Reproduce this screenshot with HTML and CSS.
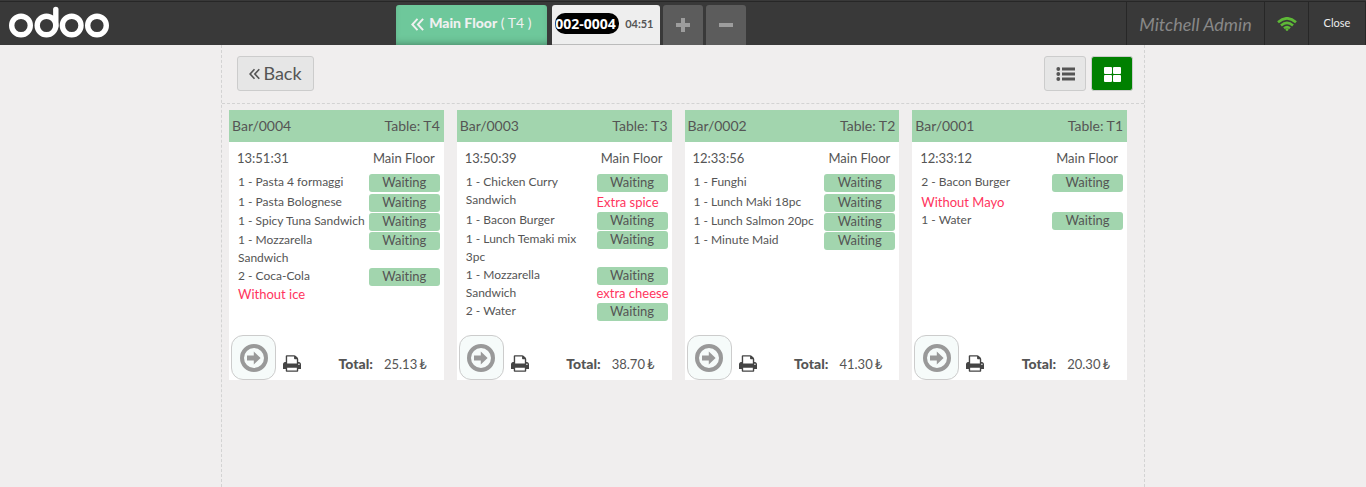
FILE: index.html
```html
<!DOCTYPE html>
<html lang="en">
<head>
<meta charset="utf-8">
<title>Odoo POS - Kitchen orders</title>
<link rel="stylesheet" href="styles.css">
</head>
<body>
<svg class="sprite" aria-hidden="true">
  <symbol id="go" viewBox="0 0 28 28"><circle cx="14" cy="14" r="12" fill="none" stroke="currentColor" stroke-width="4"/><path fill="currentColor" d="M7 11.6h6.8V7.6l6.8 6.4-6.8 6.4v-4H7z"/></symbol>
  <symbol id="print" viewBox="64 128 1664 1536"><path fill="currentColor" d="M448 1536h896v-256h-896v256zm0-640h896v-384h-160q-40 0-68-28t-28-68v-160h-640v640zm1152 64q0-26-19-45t-45-19-45 19-19 45 19 45 45 19 45-19 19-45zm128 0v416q0 13-9.5 22.5t-22.5 9.5h-224v160q0 40-28 68t-68 28h-960q-40 0-68-28t-28-68v-160h-224q-13 0-22.5-9.5t-9.5-22.5v-416q0-79 56.5-135.5t135.5-56.5h64v-544q0-40 28-68t68-28h672q40 0 88 20t76 48l152 152q28 28 48 76t20 88v256h64q79 0 135.5 56.5t56.5 135.5z"/></symbol>
  <symbol id="chevrons" viewBox="0 0 12 12"><path fill="none" stroke="currentColor" stroke-width="1.8" d="M6 .8L1.2 6 6 11.2M11.2.8L6.4 6l4.8 5.2"/></symbol>
</svg>
<header class="topbar">
  <a class="brand" href="#" aria-label="odoo">
    <svg class="logo" viewBox="0 0 100 32" fill="none" stroke="#fff" stroke-width="5.400"><circle cx="12" cy="19.500" r="9.300"/><circle cx="37.500" cy="19.500" r="9.300"/><circle cx="62.700" cy="19.500" r="9.300"/><circle cx="88" cy="19.500" r="9.300"/><path d="M46.800 20V3.500" stroke-linecap="round"/></svg>
  </a>
  <nav class="tabs">
    <button class="floor-tab"><svg class="floor-icon"><use href="#chevrons"/></svg><span><b>Main Floor</b> ( T4 )</span></button>
    <button class="order-tab"><span class="order-no">002-0004</span><span class="order-time">04:51</span></button>
    <button class="square-tab" aria-label="New order"><svg class="sign" viewBox="0 0 14 14"><path d="M7 0v14M0 7h14" stroke="#9d9d9d" stroke-width="4"/></svg></button>
    <button class="square-tab" aria-label="Remove order"><svg class="sign" viewBox="0 0 14 14"><path d="M0 7h14" stroke="#9d9d9d" stroke-width="4"/></svg></button>
  </nav>
  <div class="status">
    <span class="user">Mitchell Admin</span>
    <span class="wifi"><svg class="wifi-icon" viewBox="0 0 20 14" fill="none" stroke="#5eb937" stroke-width="2.600"><path d="M1 5.200Q10-2.600 19 5.200M4 8.400Q10 3.200 16 8.400M7 11.200Q10 8.800 13 11.200"/><circle cx="10" cy="12.600" r="1.400" fill="#5eb937" stroke="none"/></svg></span>
    <button class="close">Close</button>
  </div>
</header>
<main class="screen">
  <div class="toolbar">
    <button class="tool back"><svg class="back-icon"><use href="#chevrons"/></svg>Back</button>
    <div class="views">
      <button class="tool view" aria-label="List view"><svg class="view-icon" viewBox="0 0 19 16" fill="#555"><circle cx="2.300" cy="3" r="1.900"/><circle cx="2.300" cy="8" r="1.900"/><circle cx="2.300" cy="13" r="1.900"/><path d="M6 1.500h13v3H6zM6 6.500h13v3H6zM6 11.500h13v3H6z"/></svg></button>
      <button class="tool view active" aria-label="Grid view"><svg class="view-icon" viewBox="0 0 19 16" fill="#fff"><rect x="1" y="1" width="8" height="7" rx="1"/><rect x="10" y="1" width="8" height="7" rx="1"/><rect x="1" y="9" width="8" height="7" rx="1"/><rect x="10" y="9" width="8" height="7" rx="1"/></svg></button>
    </div>
  </div>
  <div class="cards">
    <article class="card">
      <header class="card-head"><span>Bar/0004</span><span>Table: T4</span></header>
      <div class="meta"><time>13:51:31</time><span class="floor">Main Floor</span></div>
      <ul class="lines">
        <li class="line"><span class="name">1 - Pasta 4 formaggi</span><span class="badge">Waiting</span></li>
        <li class="line"><span class="name">1 - Pasta Bolognese</span><span class="badge">Waiting</span></li>
        <li class="line"><span class="name">1 - Spicy Tuna Sandwich</span><span class="badge">Waiting</span></li>
        <li class="line"><span class="name tall">1 - Mozzarella<br>Sandwich</span><span class="badge">Waiting</span></li>
        <li class="line"><span class="name">2 - Coca-Cola</span><span class="badge">Waiting</span><span class="note">Without ice</span></li>
      </ul>
      <footer class="card-foot"><button class="go" aria-label="Advance order"><svg class="go-icon"><use href="#go"/></svg></button><button class="print" aria-label="Print"><svg class="print-icon"><use href="#print"/></svg></button><b class="total">Total:</b><span class="amount">25.13<span class="lira">₺</span></span></footer>
    </article>
    <article class="card">
      <header class="card-head"><span>Bar/0003</span><span>Table: T3</span></header>
      <div class="meta"><time>13:50:39</time><span class="floor">Main Floor</span></div>
      <ul class="lines">
        <li class="line"><span class="name tall">1 - Chicken Curry<br>Sandwich</span><span class="badge">Waiting</span><span class="note side">Extra spice</span></li>
        <li class="line"><span class="name">1 - Bacon Burger</span><span class="badge">Waiting</span></li>
        <li class="line"><span class="name tall">1 - Lunch Temaki mix<br>3pc</span><span class="badge">Waiting</span></li>
        <li class="line"><span class="name tall">1 - Mozzarella<br>Sandwich</span><span class="badge">Waiting</span><span class="note side">extra cheese</span></li>
        <li class="line"><span class="name">2 - Water</span><span class="badge">Waiting</span></li>
      </ul>
      <footer class="card-foot"><button class="go" aria-label="Advance order"><svg class="go-icon"><use href="#go"/></svg></button><button class="print" aria-label="Print"><svg class="print-icon"><use href="#print"/></svg></button><b class="total">Total:</b><span class="amount">38.70<span class="lira">₺</span></span></footer>
    </article>
    <article class="card">
      <header class="card-head"><span>Bar/0002</span><span>Table: T2</span></header>
      <div class="meta"><time>12:33:56</time><span class="floor">Main Floor</span></div>
      <ul class="lines">
        <li class="line"><span class="name">1 - Funghi</span><span class="badge">Waiting</span></li>
        <li class="line"><span class="name">1 - Lunch Maki 18pc</span><span class="badge">Waiting</span></li>
        <li class="line"><span class="name">1 - Lunch Salmon 20pc</span><span class="badge">Waiting</span></li>
        <li class="line"><span class="name">1 - Minute Maid</span><span class="badge">Waiting</span></li>
      </ul>
      <footer class="card-foot"><button class="go" aria-label="Advance order"><svg class="go-icon"><use href="#go"/></svg></button><button class="print" aria-label="Print"><svg class="print-icon"><use href="#print"/></svg></button><b class="total">Total:</b><span class="amount">41.30<span class="lira">₺</span></span></footer>
    </article>
    <article class="card">
      <header class="card-head"><span>Bar/0001</span><span>Table: T1</span></header>
      <div class="meta"><time>12:33:12</time><span class="floor">Main Floor</span></div>
      <ul class="lines">
        <li class="line"><span class="name">2 - Bacon Burger</span><span class="badge">Waiting</span><span class="note">Without Mayo</span></li>
        <li class="line"><span class="name">1 - Water</span><span class="badge">Waiting</span></li>
      </ul>
      <footer class="card-foot"><button class="go" aria-label="Advance order"><svg class="go-icon"><use href="#go"/></svg></button><button class="print" aria-label="Print"><svg class="print-icon"><use href="#print"/></svg></button><b class="total">Total:</b><span class="amount">20.30<span class="lira">₺</span></span></footer>
    </article>
  </div>
</main>
</body>
</html>
```
FILE: styles.css
```css
* { box-sizing: border-box; }
body {
  margin: 0;
  min-height: 100vh;
  display: flex;
  flex-direction: column;
  background: #f0eeee;
  color: #555;
  font: 13px/18px Lato, "Liberation Sans", sans-serif;
  font-variant-ligatures: none;
}
button { font: inherit; color: inherit; border: 0; padding: 0; cursor: pointer; }
.sprite { display: none; }

.topbar {
  display: flex;
  height: 45px;
  background: #393939;
  border-top: 1px solid #393939;
  box-shadow: inset 0 1px #272727;
}
.brand { flex: 0 0 29%; padding: 5px 9px; }
.logo { display: block; width: 100px; height: 32px; }
.tabs { display: flex; align-items: stretch; padding-top: 4px; gap: 3px; }
.tabs button { border-radius: 3px 3px 0 0; }
.floor-tab {
  display: flex;
  align-items: center;
  gap: 5px;
  width: 151px;
  margin-right: 2px;
  padding: 0 0 4px 15px;
  background: #6ec89b;
  box-shadow: inset 0 -5px 10px -6px rgba(0, 0, 0, .5);
  color: #f0f0f0;
  font-size: 14px;
  white-space: nowrap;
}
.floor-icon { width: 13px; height: 13px; margin-top: 2px; }
.tabs .floor-tab b { font-weight: 900; }
.order-tab {
  display: flex;
  align-items: center;
  gap: 6px;
  width: 108px;
  padding: 0 3px 3px;
  background: #eee;
  box-shadow: inset 0 -1px #bbb;
}
.order-no {
  width: 64px;
  overflow: hidden;
  border-radius: 10px;
  background: #000;
  color: #fff;
  font-family: "Open Sans", Lato, sans-serif;
  font-size: 14px;
  font-weight: 700;
  line-height: 21px;
  text-align: left;
  white-space: nowrap;
}
.order-time { font-size: 11px; font-weight: 700; }
.square-tab { display: grid; place-items: center; width: 40px; background: #5c5c5c; }
.sign { width: 14px; height: 14px; }
.status { display: flex; margin: 1px 0 0 auto; border-right: 1px solid #272727; }
.status > * { display: flex; align-items: center; justify-content: center; border-left: 1px solid #272727; }
.user { width: 138px; color: #888; font-size: 18px; font-style: italic; }
.wifi { width: 44px; }
.wifi-icon { width: 20px; height: 14px; }
.status .close { width: 57px; padding-bottom: 2px; border-left: 1px solid #272727; background: none; color: #eee; font-size: 11px; }

.screen {
  flex: 1;
  width: 100%;
  max-width: 924px;
  margin: 0 auto;
  border: dashed #d3d3d3;
  border-width: 0 1px;
}
.toolbar {
  display: flex;
  justify-content: space-between;
  padding: 11px 11px 12px 15px;
  border-bottom: 1px dashed #d3d3d3;
}
.tool {
  display: flex;
  align-items: center;
  justify-content: center;
  height: 35px;
  border: 1px solid #ccc;
  border-radius: 3px;
  background: #e6e6e6;
}
.back { gap: 3px; width: 77px; padding-bottom: 1px; font-size: 18px; }
.back-icon { width: 11px; height: 12px; margin-top: 2px; }
.views { display: flex; gap: 5px; }
.view { width: 42px; }
.view.active { background: #008000; }
.view-icon { width: 19px; height: 16px; }

.cards {
  display: grid;
  grid-template-columns: repeat(4, minmax(0, 1fr));
  gap: 13px;
  padding: 6px 17px 0 7px;
}
.card { display: flex; flex-direction: column; min-height: 270px; background: #fff; }
.card-head {
  display: flex;
  justify-content: space-between;
  padding: 0 4px 0 3px;
  background: #a2d5ae;
  font-size: 14px;
  line-height: 32px;
}
.meta { display: flex; justify-content: space-between; padding: 7px 9px 6px 8px; }
.lines { margin: 0; padding: 0 4px 0 9px; list-style: none; }
.line {
  display: grid;
  grid-template-columns: minmax(0, 1fr) 71px;
  align-items: start;
  min-height: 19px;
}
.name { font-size: 12px; white-space: nowrap; }
.tall { grid-row: span 2; }
.badge {
  height: 18px;
  margin: 1px 0 -1px;
  border-radius: 3px;
  background: #a2d5ae;
  line-height: 17px;
  text-align: center;
}
.line:first-child .badge { margin-bottom: 1px; }
.note { color: #ff355e; }
.side { grid-column: 2; white-space: nowrap; }
.card-foot { display: flex; align-items: center; margin-top: auto; padding: 0 17px 0 2px; }
.go {
  display: grid;
  place-items: center;
  width: 45px;
  height: 45px;
  border: 1px solid #ccc;
  border-radius: 12px;
  background: #f6fbfa;
  color: #999;
}
.go-icon { width: 28px; height: 28px; }
.print { margin: 12px 0 0 7px; background: none; color: #444; }
.print-icon { display: block; width: 18px; height: 17px; }
.total { margin: 13px 11px 0 auto; font-size: 14px; font-weight: 900; }
.amount { margin-top: 13px; }
.lira { margin-left: 2px; }
```
